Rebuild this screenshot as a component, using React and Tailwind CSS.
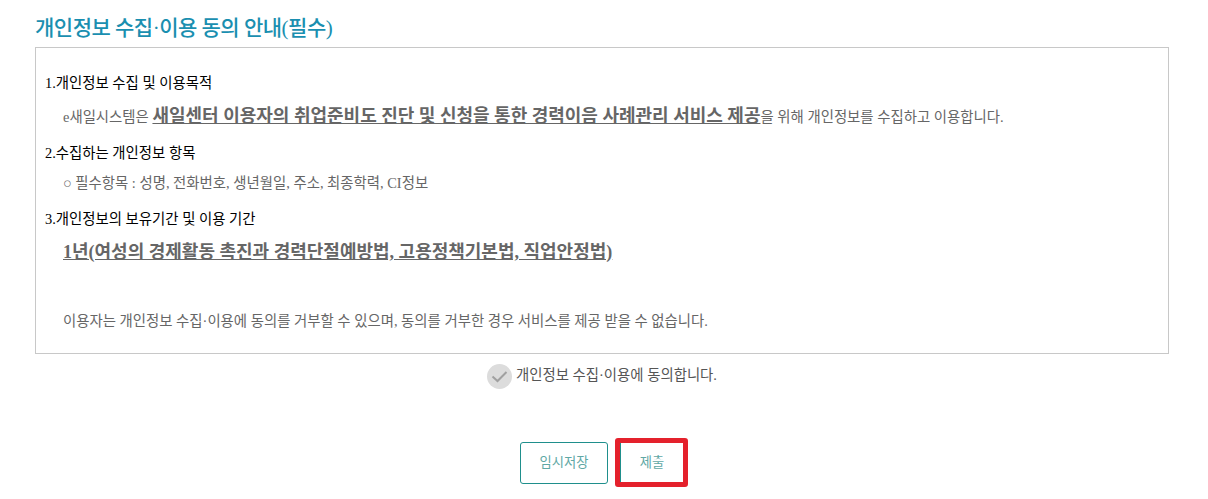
import React from 'react';

const serif = { fontFamily: '"Liberation Serif", "Noto Sans CJK KR", serif' };

function App() {
  return (
    <div className="w-[1208px] h-[499px] overflow-hidden bg-white pl-[35px] pr-[39px] pt-[14px]" style={serif}>
      {/* Title */}
      <h2 className="h-[33px] text-[21px] leading-[28px] font-medium tracking-[-0.5px] text-[#1a8fb0]">
        개인정보 수집·이용 동의 안내(필수)
      </h2>

      {/* Terms box */}
      <div className="h-[307px] border border-[#c8c8c8] pl-[9px] pt-[25px] text-[14.4px] leading-[20px] text-[#666]">
        <p className="text-black">1.개인정보 수집 및 이용목적</p>
        <p className="mt-[10px] pl-[18px] h-[26px] leading-[26px] whitespace-nowrap">
          e새일시스템은{' '}
          <strong className="text-[18px] font-bold underline">
            새일센터 이용자의 취업준비도 진단 및 신청을 통한 경력이음 사례관리 서비스 제공
          </strong>
          을 위해 개인정보를 수집하고 이용합니다.
        </p>
        <p className="mt-[14px] text-black">2.수집하는 개인정보 항목</p>
        <p className="mt-[10px] pl-[18px]">○ 필수항목 : 성명, 전화번호, 생년월일, 주소, 최종학력, CI정보</p>
        <p className="mt-[16px] text-black">3.개인정보의 보유기간 및 이용 기간</p>
        <p className="mt-[10px] pl-[18px] h-[26px] leading-[26px]">
          <strong className="text-[18px] font-bold underline">
            1년(여성의 경제활동 촉진과 경력단절예방법, 고용정책기본법, 직업안정법)
          </strong>
        </p>
        <p className="mt-[46px] pl-[18px]">
          이용자는 개인정보 수집·이용에 동의를 거부할 수 있으며, 동의를 거부한 경우 서비스를 제공 받을 수 없습니다.
        </p>
      </div>

      {/* Agree checkbox */}
      <label className="mt-[9px] flex h-[26px] items-center justify-center gap-[4px] text-[14.4px] text-[#555]">
        <span className="flex h-[25px] w-[25px] items-center justify-center rounded-full bg-[#dcdcdc]">
          <svg width="17" height="13" viewBox="0 0 17 13" fill="none">
            <path d="M1.5 6.5 L6.5 11 L15.5 2" stroke="#a0a0a0" strokeWidth="2" />
          </svg>
        </span>
        개인정보 수집·이용에 동의합니다.
      </label>

      {/* Buttons */}
      <div className="mt-[49px] flex items-center pl-[485px]">
        <button className="h-[42px] w-[88px] rounded-[3px] border border-[#1f8f8c] bg-white text-[13.3px] text-[#5fa8a5]">
          임시저장
        </button>
        <div className="ml-[7px] h-[49px] w-[73px] rounded-[3px] border-[5px] border-[#e4212c] bg-white">
          <button className="h-full w-full border-l border-[#1f8f8c] text-[13.3px] text-[#5fa8a5]">
            제출
          </button>
        </div>
      </div>
    </div>
  );
}

export default App;
